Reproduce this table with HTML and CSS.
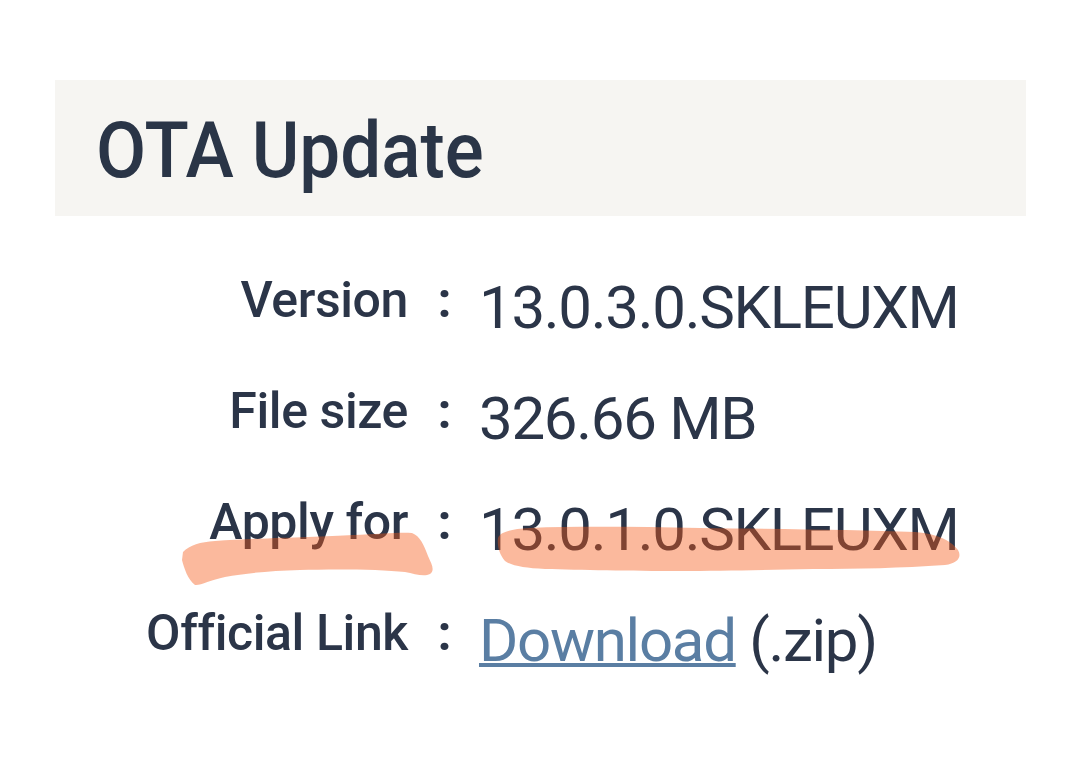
FILE: index.html
```html
<!DOCTYPE html>
<html lang="en">
<head>
<meta charset="utf-8">
<title>OTA Update</title>
<link rel="stylesheet" href="styles.css">
</head>
<body>
<main class="page">
  <header class="card-head">
    <h1 class="title">OTA Update</h1>
  </header>
  <section class="info">
    <div class="row">
      <span class="label">Version</span>
      <span class="colon">:</span>
      <span class="value">13.0.3.0.SKLEUXM</span>
    </div>
    <div class="row">
      <span class="label">File size</span>
      <span class="colon">:</span>
      <span class="value">326.66 MB</span>
    </div>
    <div class="row">
      <span class="label">Apply for</span>
      <span class="colon">:</span>
      <span class="value">13.0.1.0.SKLEUXM</span>
    </div>
    <div class="row">
      <span class="label">Official Link</span>
      <span class="colon">:</span>
      <span class="value"><a class="link" href="#">Download</a> (.zip)</span>
    </div>
  </section>
  <svg class="marker" width="1080" height="772" viewBox="0 0 1080 772" aria-hidden="true">
    <path d="M183 552 C190 545 200 542 215 541 C260 538 320 537 353 535 C380 534 400 532 412 533 C420 536 424 545 428 556 C432 565 435 570 430 574 C424 577 415 574 405 572 C380 569 330 569 300 570 C270 571 245 573 225 577 C210 580 200 586 195 585 C188 580 184 568 182 560 Z"/>
    <path d="M498 538 C500 532 510 529 530 528 C580 526 640 527 700 528 C790 529 860 530 915 532 C940 534 952 542 958 550 C962 557 958 563 945 565 C900 568 860 569 813 569 C760 570 720 571 680 571 C630 571 580 570 545 569 C525 568 512 566 505 561 C499 554 497 545 498 538 Z"/>
  </svg>
</main>
</body>
</html>
```

FILE: styles.css
```css
html, body {
  margin: 0;
  padding: 0;
  background: #ffffff;
}

body {
  font-family: Roboto, "Noto Sans", "Liberation Sans", sans-serif;
  color: #2b3548;
}

.page {
  position: relative;
  width: 1080px;
  height: 772px;
  padding-top: 80px;
  box-sizing: border-box;
  overflow: hidden;
}

.card-head {
  margin: 0 54px 0 55px;
  height: 136px;
  background: #f6f5f2;
  display: flex;
  align-items: center;
  padding: 7px 0 0 41px;
  box-sizing: border-box;
}

.title {
  margin: 0;
  font-size: 77px;
  font-weight: 500;
  line-height: 1;
  color: #2a3547;
  transform: scaleX(0.945);
  transform-origin: left center;
  white-space: nowrap;
}

.info {
  margin-top: 29px;
  display: grid;
  grid-auto-rows: 111px;
}

.row {
  display: grid;
  grid-template-columns: 408px 71px auto;
  align-items: start;
  line-height: 111px;
}

.label {
  text-align: right;
  font-size: 50px;
  font-weight: 500;
  letter-spacing: -0.4px;
  color: #2b3548;
}

.colon {
  text-align: center;
  font-size: 50px;
  font-weight: 700;
  color: #2b3548;
  padding-left: 2px;
}

.value {
  font-size: 60px;
  font-weight: 400;
  letter-spacing: -1.3px;
  color: #2b3548;
  white-space: nowrap;
  padding-top: 7px;
}

.link {
  color: #5a7ea3;
  text-decoration: underline;
  text-decoration-thickness: 4px;
  text-underline-offset: 2px;
}

.marker {
  position: absolute;
  top: 0;
  left: 0;
  pointer-events: none;
}

.marker path {
  fill: rgba(245, 88, 22, 0.42);
}
```
